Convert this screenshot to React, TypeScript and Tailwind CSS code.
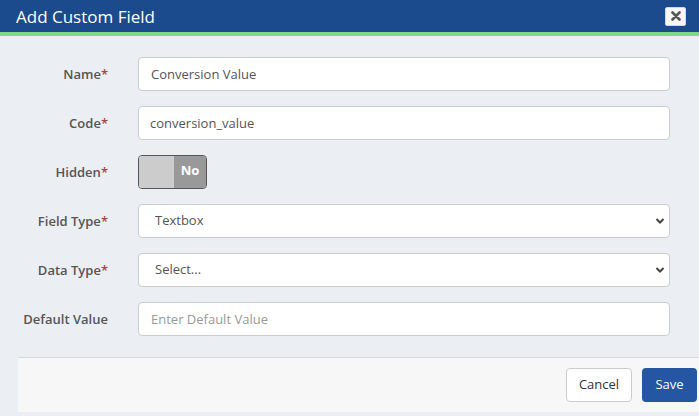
import React from "react";

const font = { fontFamily: '"Open Sans", "Noto Sans", sans-serif' };

const Label: React.FC<{ text: string; required?: boolean }> = ({ text, required }) => (
  <label className="text-right text-[13px] font-semibold text-[#555] leading-none">
    {text}
    {required && <span className="text-[#a5463f]">*</span>}
  </label>
);

const Chevron = () => (
  <svg
    className="pointer-events-none absolute right-[5px] top-1/2 -translate-y-1/2"
    width="10"
    height="7"
    viewBox="0 0 10 7"
  >
    <path d="M1.5 1.5 L5 5 L8.5 1.5" fill="none" stroke="#444" strokeWidth="2" />
  </svg>
);

export default function App() {
  return (
    <div className="w-[699px] h-[416px] bg-[#ebeef3] overflow-hidden" style={font}>
      <div className="h-[32px] bg-[#1b4a8d] flex items-center justify-between pl-[16px] pr-[13px]">
        <h1 className="text-white text-[17px] leading-none">Add Custom Field</h1>
        <button className="w-[21px] h-[19px] bg-[#f6f6f6] border border-[#d6d6d6] rounded-[2px] flex items-center justify-center">
          <svg width="10" height="10" viewBox="0 0 10 10">
            <path d="M1.5 1.5 L8.5 8.5 M8.5 1.5 L1.5 8.5" stroke="#555" strokeWidth="2.6" strokeLinecap="round" />
          </svg>
        </button>
      </div>
      <div className="h-[4px] bg-[#7fd883]" />

      <div className="pt-[21px] pr-[29px] flex flex-col gap-[15px]">
        <div className="grid grid-cols-[108px_1fr] gap-x-[30px] items-center">
          <Label text="Name" required />
          <input
            defaultValue="Conversion Value"
            className="h-[34px] bg-white border border-[#ccc] rounded-[4px] px-[12px] text-[13px] text-[#555] outline-none"
          />
        </div>
        <div className="grid grid-cols-[108px_1fr] gap-x-[30px] items-center">
          <Label text="Code" required />
          <input
            defaultValue="conversion_value"
            className="h-[34px] bg-white border border-[#ccc] rounded-[4px] px-[11px] text-[13px] text-[#555] outline-none"
          />
        </div>
        <div className="grid grid-cols-[108px_1fr] gap-x-[30px] items-center">
          <Label text="Hidden" required />
          <div className="w-[69px] h-[34px] flex border border-[#555] rounded-[4px] overflow-hidden">
            <div className="w-[35px] bg-[#cccccc]" />
            <div className="flex-1 bg-[#999999] flex items-center justify-center pb-[3px] text-white text-[13px] font-bold">
              No
            </div>
          </div>
        </div>
        <div className="grid grid-cols-[108px_1fr] gap-x-[30px] items-center">
          <Label text="Field Type" required />
          <div className="relative">
            <select
              defaultValue="Textbox"
              className="w-full h-[34px] appearance-none bg-white border border-[#ccc] rounded-[4px] pl-[16px] text-[13px] text-[#555] outline-none"
            >
              <option>Textbox</option>
            </select>
            <Chevron />
          </div>
        </div>
        <div className="grid grid-cols-[108px_1fr] gap-x-[30px] items-center">
          <Label text="Data Type" required />
          <div className="relative">
            <select
              defaultValue="Select..."
              className="w-full h-[34px] appearance-none bg-white border border-[#ccc] rounded-[4px] pl-[16px] text-[13px] text-[#555] outline-none"
            >
              <option>Select...</option>
            </select>
            <Chevron />
          </div>
        </div>
        <div className="grid grid-cols-[108px_1fr] gap-x-[30px] items-center">
          <Label text="Default Value" />
          <input
            placeholder="Enter Default Value"
            className="h-[34px] bg-white border border-[#ccc] rounded-[4px] px-[12px] text-[13px] text-[#555] placeholder:text-[#999] outline-none"
          />
        </div>
      </div>

      <div className="mt-[21px] ml-[18px] h-[55px] bg-[#f7f7f7] border-t border-[#d9d9d9] flex items-center justify-end gap-[10px] pr-[2px]">
        <button className="h-[34px] w-[66px] bg-white border border-[#ccc] rounded-[4px] text-[13px] text-[#333]">
          Cancel
        </button>
        <button className="h-[34px] w-[55px] bg-[#2456a4] rounded-[4px] text-[13px] text-white">
          Save
        </button>
      </div>
    </div>
  );
}
